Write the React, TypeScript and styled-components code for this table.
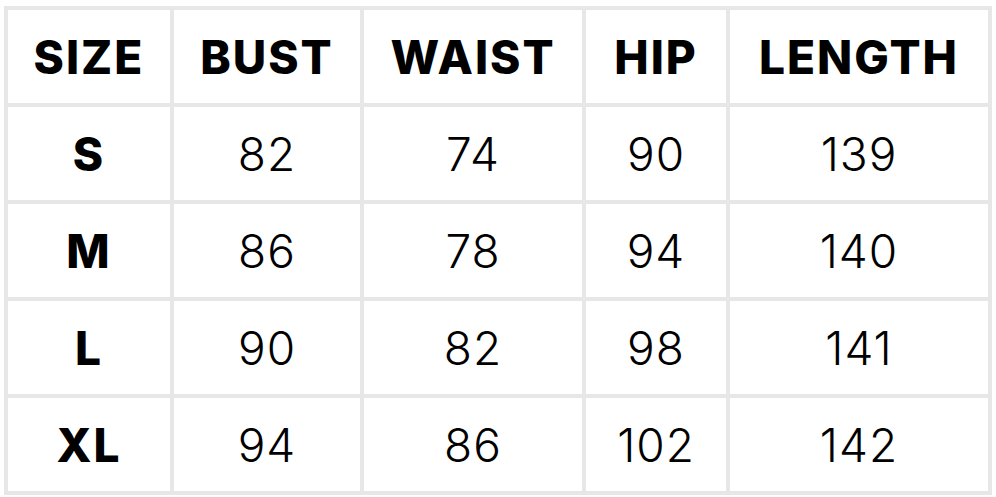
import React from "react";
import styled, { createGlobalStyle } from "styled-components";

const GlobalStyle = createGlobalStyle`
  html, body {
    margin: 0;
    padding: 0;
    background: #ffffff;
  }
  body {
    font-family: Inter, "Noto Sans", sans-serif;
  }
`;

const Page = styled.div`
  padding: 6px 0 0 4px;
`;

const Grid = styled.div`
  display: grid;
  grid-template-columns: 162px 186px 218px 140px 258px;
  grid-auto-rows: 93px;
  gap: 4px;
  padding: 4px;
  width: max-content;
  background: #e7e7e7;
`;

const Cell = styled.div<{ $bold?: boolean }>`
  display: flex;
  align-items: center;
  justify-content: center;
  background: #ffffff;
  color: #000000;
  font-size: 46px;
  font-weight: ${(p) => (p.$bold ? 800 : 350)};
  letter-spacing: ${(p) => (p.$bold ? "2px" : "1px")};
  line-height: 1;
`;

const headers = ["SIZE", "BUST", "WAIST", "HIP", "LENGTH"];

const rows = [
  ["S", "82", "74", "90", "139"],
  ["M", "86", "78", "94", "140"],
  ["L", "90", "82", "98", "141"],
  ["XL", "94", "86", "102", "142"],
];

const App = () => {
  return (
    <Page>
      <GlobalStyle />
      <Grid>
        {headers.map((h) => (
          <Cell key={h} $bold>
            {h}
          </Cell>
        ))}
        {rows.map((row) =>
          row.map((value, i) => (
            <Cell key={row[0] + i} $bold={i === 0}>
              {value}
            </Cell>
          ))
        )}
      </Grid>
    </Page>
  );
};

export default App;
